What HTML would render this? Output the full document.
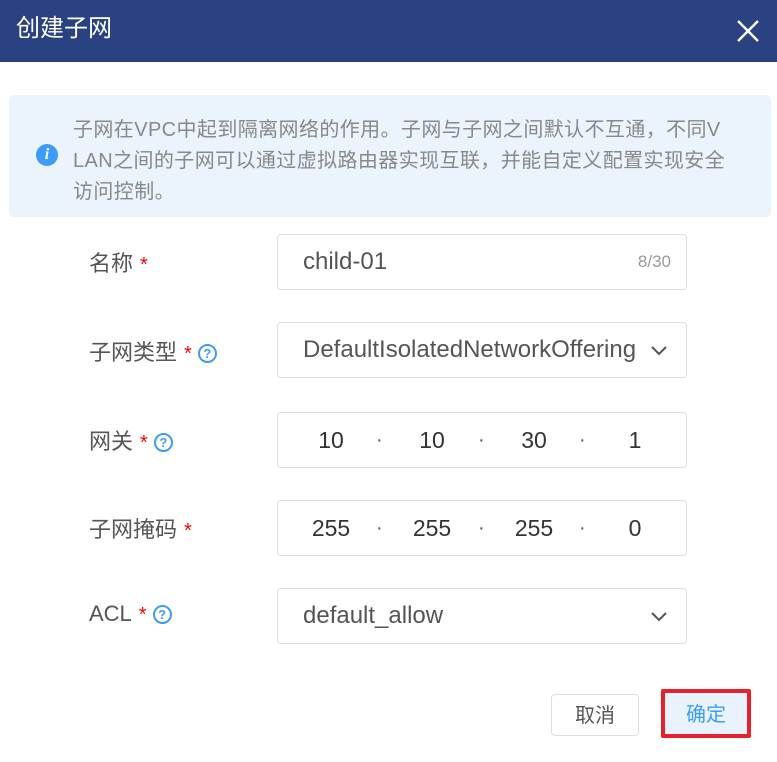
<!DOCTYPE html>
<html><head><meta charset="utf-8"><style>
*{box-sizing:border-box;margin:0;padding:0}
body{width:777px;height:762px;background:#fff;font-family:"Liberation Sans","Noto Sans CJK SC",sans-serif;position:relative;overflow:hidden}
.hd{position:absolute;left:0;top:0;width:777px;height:62px;background:#2b4282;color:#fff;font-size:24px;line-height:58px;padding-left:16px}
.x{position:absolute;right:17px;top:19px;width:24px;height:24px}
.info{position:absolute;left:9px;top:95px;width:762px;height:122px;background:#ebf3fd;border-radius:5px;color:#888;font-size:20px;line-height:31px;padding:20px 0 0 64px;white-space:nowrap;letter-spacing:0.4px}
.ic{position:absolute;left:36px;top:144px;width:22px;height:22px;border-radius:50%;background:#3e9cf8;color:#fff;font:italic bold 16px/22px "Liberation Serif",serif;text-align:center}
.lb{position:absolute;left:89px;font-size:22px;color:#555}
.lb .s{color:#f00;margin-left:7px;font-size:20px}
.q{display:inline-block;width:19px;height:19px;border:2px solid #3e9cf8;border-radius:50%;color:#3e9cf8;font:bold 13px/15px "Liberation Sans",sans-serif;text-align:center;vertical-align:2px;margin-left:6px}
.in{position:absolute;left:277px;width:410px;height:56px;border:1px solid #dcdfe6;border-radius:4px;font-size:24px;color:#555;line-height:54px;padding-left:25px;overflow:hidden;white-space:nowrap}
.cnt{position:absolute;right:15px;top:0;font-size:17px;color:#999}
.chev{position:absolute;right:18px;top:22px}
.ip{position:absolute;top:0;font-size:23px;color:#333;width:60px;text-align:center;margin-left:-30px}
.dot{position:absolute;top:0;color:#555;font-size:20px}
.b{position:absolute;font-size:20px;text-align:center;border-radius:4px}
</style></head><body>
<div class="hd">创建子网</div>
<svg class="x" viewBox="0 0 24 24"><path d="M2 2L22 22M22 2L2 22" stroke="#fff" stroke-width="2.4"/></svg>
<div class="info">子网在VPC中起到隔离网络的作用。子网与子网之间默认不互通，不同V<br>LAN之间的子网可以通过虚拟路由器实现互联，并能自定义配置实现安全<br>访问控制。</div>
<div class="ic">i</div>

<div class="lb" style="top:246px">名称<span class="s">*</span></div>
<div class="in" style="top:234px">child-01<span class="cnt">8/30</span></div>

<div class="lb" style="top:335px">子网类型<span class="s">*</span><span class="q">?</span></div>
<div class="in" style="top:322px;padding-right:50px">DefaultIsolatedNetworkOffering<svg class="chev" width="18" height="12" viewBox="0 0 18 12" style="background:#fff;box-shadow:0 0 0 12px #fff"><path d="M2 2L9 9L16 2" fill="none" stroke="#555" stroke-width="2"/></svg></div>

<div class="lb" style="top:424px">网关<span class="s">*</span><span class="q">?</span></div>
<div class="in" style="top:412px;padding:0"><span class="ip" style="left:53px">10</span><span class="dot" style="left:98px">·</span><span class="ip" style="left:154px">10</span><span class="dot" style="left:200px">·</span><span class="ip" style="left:256px">30</span><span class="dot" style="left:301px">·</span><span class="ip" style="left:357px">1</span></div>

<div class="lb" style="top:512px">子网掩码<span class="s">*</span></div>
<div class="in" style="top:500px;padding:0"><span class="ip" style="left:53px">255</span><span class="dot" style="left:98px">·</span><span class="ip" style="left:154px">255</span><span class="dot" style="left:200px">·</span><span class="ip" style="left:256px">255</span><span class="dot" style="left:301px">·</span><span class="ip" style="left:357px">0</span></div>

<div class="lb" style="top:601px">ACL<span class="s">*</span><span class="q">?</span></div>
<div class="in" style="top:588px">default_allow<svg class="chev" width="18" height="12" viewBox="0 0 18 12"><path d="M2 2L9 9L16 2" fill="none" stroke="#555" stroke-width="2"/></svg></div>

<div class="b" style="left:551px;top:694px;width:88px;height:42px;border:1px solid #dcdfe6;color:#555;line-height:42px">取消</div>
<div class="b" style="left:661px;top:689px;width:90px;height:49px;border:4px solid #e8202a;background:#e8f3ff;color:#3e9cf8;line-height:44px;border-radius:2px">确定</div>
</body></html>
